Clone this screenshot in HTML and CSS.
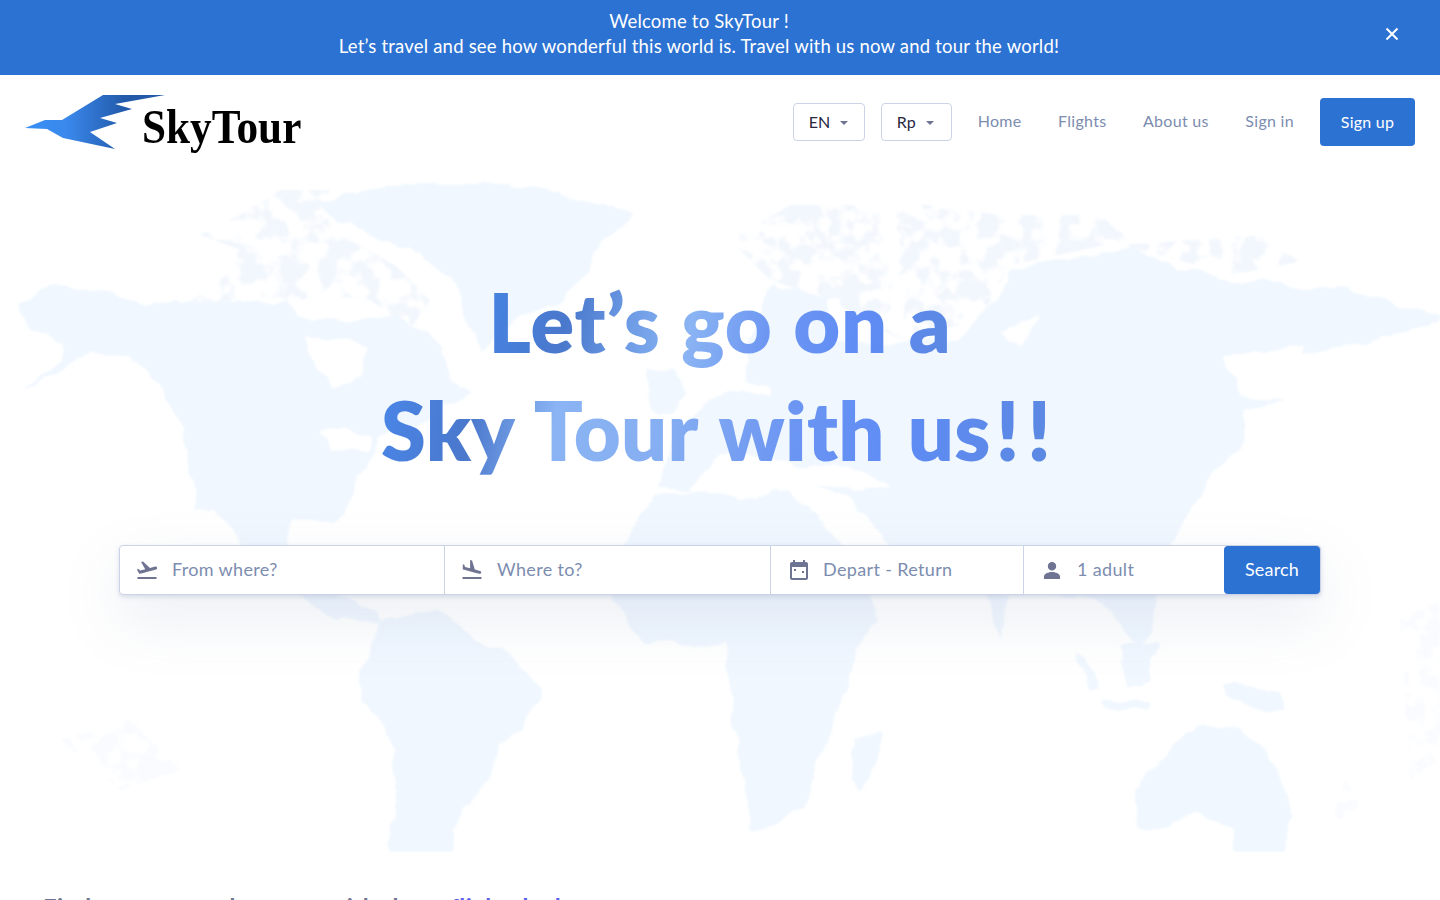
FILE: index.html
```html
<!DOCTYPE html>
<html lang="en">
<head>
<meta charset="utf-8">
<title>SkyTour</title>
<link rel="stylesheet" href="styles.css">
</head>
<body>
<div class="banner">
  <p class="banner-text">Welcome to SkyTour !<br>Let’s travel and see how wonderful this world is. Travel with us now and tour the world!</p>
  <button class="banner-close" aria-label="Close">
    <svg viewBox="0 0 14 14" width="14" height="14"><path d="M1.5 1.5l11 11M12.5 1.5l-11 11" stroke="#fff" stroke-width="2" fill="none"/></svg>
  </button>
</div>
<header class="nav">
  <a class="logo">
    <svg class="logo-mark" viewBox="25 95 140 54" width="140" height="54">
      <defs><linearGradient id="lg" x1="0" y1="0" x2="1" y2="0"><stop offset="0" stop-color="#3a90f5"/><stop offset=".3" stop-color="#3a88ec"/><stop offset=".72" stop-color="#2259a9"/><stop offset="1" stop-color="#2259a9"/></linearGradient></defs>
      <polygon fill="url(#lg)" points="25,128 45,120 62,120 103,95 165,95 115,104 132,109 100,118 117,123 90,132 115,149 63,138 47,129"/>
    </svg>
    <span class="logo-text">SkyTour</span>
  </a>
  <nav class="nav-items">
    <button class="select select-en">EN<i class="caret"></i></button>
    <button class="select select-rp">Rp<i class="caret"></i></button>
    <a class="link">Home</a>
    <a class="link">Flights</a>
    <a class="link">About us</a>
    <a class="link link-last">Sign in</a>
    <button class="signup">Sign up</button>
  </nav>
</header>
<main class="hero">
  <svg class="map" viewBox="0 169 1440 683" aria-hidden="true">
    <defs>
      <filter id="rough" x="0" y="169" width="1440" height="683" filterUnits="userSpaceOnUse" primitiveUnits="userSpaceOnUse">
        <feTurbulence type="fractalNoise" baseFrequency=".028" numOctaves="4" seed="7" result="n"/>
        <feDisplacementMap in="SourceGraphic" in2="n" scale="16" xChannelSelector="R" yChannelSelector="G"/>
        <feGaussianBlur stdDeviation="1"/>
      </filter>
      <filter id="mottle" x="0" y="169" width="1440" height="683" filterUnits="userSpaceOnUse" primitiveUnits="userSpaceOnUse">
        <feTurbulence type="fractalNoise" baseFrequency=".05" numOctaves="3" seed="3"/>
        <feColorMatrix type="matrix" values="0 0 0 0 0  0 0 0 0 0  0 0 0 0 0  7 0 0 0 -3.1" result="m"/>
        <feComposite in="SourceGraphic" in2="m" operator="in"/>
        <feGaussianBlur stdDeviation="1.2"/>
      </filter>
    </defs>
    <g class="map-arctic" filter="url(#mottle)">
      <polygon points="190,300 215,285 240,250 200,235 240,215 280,190 330,190 350,240 395,265 430,300 410,330 370,300 325,295 300,300 240,296 205,312"/>
      <polygon points="730,240 790,205 930,205 1000,215 1100,215 1130,240 1010,265 980,320 900,340 830,300 770,280"/>
      <polygon points="1120,245 1260,235 1300,262 1230,275 1160,255"/>
      <g class="map-faint">
        <polygon points="1345,780 1360,800 1345,825 1335,815"/>
        <polygon points="60,740 130,720 180,770 120,790"/>
        <polygon points="1400,620 1440,600 1440,760 1410,780"/>
      </g>
    </g>
    <g filter="url(#rough)">
      <g class="map-land">
        <polygon points="20,300 55,286 100,290 142,302 175,298 220,303 240,296 262,305 285,300 300,318 345,322 400,315 430,340 450,375 470,395 445,402 430,420 400,425 378,438 365,470 352,490 345,512 330,520 294,523 285,545 330,590 350,600 378,612 385,625 330,618 290,590 250,560 216,510 197,510 188,470 184,430 147,367 92,350 60,372 20,395 60,362 65,345 30,330"/>
        <polygon points="320,200 370,186 430,183 540,186 630,212 600,240 590,270 560,300 520,320 482,350 465,320 452,275 410,250 375,235 335,225"/>
        <polygon points="385,620 440,610 470,635 500,650 540,690 525,730 500,745 480,790 450,830 453,870 388,870 395,790 395,750 365,700 358,670 375,640"/>
        <polygon points="652,495 700,490 740,500 790,490 812,510 850,560 881,620 860,640 840,710 815,770 800,810 753,833 735,743 725,645 643,643 615,600 620,550"/>
        <polygon points="854,740 880,737 872,775 860,793 852,780"/>
        <polygon points="660,485 668,440 700,410 720,395 745,385 750,340 775,287 825,295 830,338 880,348 960,338 1000,300 1010,270 1130,247 1180,270 1225,280 1317,287 1363,293 1445,317 1400,337 1330,347 1290,365 1285,400 1250,410 1239,447 1215,470 1193,510 1160,560 1157,595 1150,625 1140,650 1115,610 1065,595 1040,590 1010,595 1000,640 985,595 960,570 905,590 880,530 850,500 815,480 790,460 720,455 690,490"/>
        <polygon points="645,370 670,367 684,395 675,410 650,408"/>
        <polygon points="1120,645 1157,643 1150,680 1125,687"/>
        <polygon points="1075,650 1085,652 1100,690 1092,693"/>
        <polygon points="1102,700 1148,702 1148,710 1104,708"/>
        <polygon points="1221,683 1276,692 1285,710 1250,708 1222,698"/>
        <polygon points="1134,790 1160,760 1180,740 1200,727 1225,730 1240,725 1260,745 1285,790 1292,815 1282,870 1240,870 1235,830 1200,815 1160,825 1138,830"/>
      </g>
      <g class="map-sea">
        <polygon points="303,337 367,345 365,375 335,387 310,360"/>
        <polygon points="320,430 372,435 368,450 330,452"/>
        <polygon points="294,523 349,525 340,543 300,540"/>
        <polygon points="720,383 766,380 768,392 725,392"/>
        <polygon points="789,463 860,470 894,488 860,492 810,480"/>
        <polygon points="894,277 915,272 905,320 885,330"/>
        <polygon points="1225,352 1308,347 1290,400 1240,398"/>
        <polygon points="1000,330 1040,315 1020,350"/>
      </g>
    </g>
  </svg>
  <h1 class="headline"><span class="line line-one">Let’s go on a</span><span class="line line-two">Sky Tour with us<span class="bangs">!!</span></span></h1>
  <form class="search">
    <div class="field field-wide field-from">
      <svg class="icon" viewBox="0 0 24 24"><path d="M2.5 19h19v2h-19v-2zm19.57-9.36c-.21-.8-1.04-1.28-1.84-1.06L14.92 10l-6.9-6.43-1.93.51 4.14 7.17-4.97 1.33-1.97-1.54-1.45.39 2.59 4.49s7.12-1.9 16.57-4.43c.81-.23 1.28-1.05 1.07-1.85z"/></svg>
      <span>From where?</span>
    </div>
    <div class="field field-wide">
      <svg class="icon" viewBox="0 0 24 24"><path d="M2.5 19h19v2h-19v-2zm7.18-5.73l4.35 1.16 5.31 1.42c.8.21 1.62-.26 1.84-1.06.21-.8-.26-1.62-1.06-1.84l-5.31-1.42-2.76-9.02L10.12 2v8.28L5.15 8.95l-.93-2.32-1.45-.39v5.17l1.6.43 5.31 1.43z"/></svg>
      <span>Where to?</span>
    </div>
    <div class="field field-date">
      <svg class="icon" viewBox="0 0 24 24"><path d="M19 4h-1V2h-2v2H8V2H6v2H5c-1.11 0-1.99.9-1.99 2L3 20a2 2 0 0 0 2 2h14c1.1 0 2-.9 2-2V6c0-1.1-.9-2-2-2zm0 16H5V9h14v11z"/><rect x="7" y="11" width="2" height="2"/><rect x="15" y="13" width="2" height="2"/></svg>
      <span>Depart - Return</span>
    </div>
    <div class="field field-people">
      <svg class="icon" viewBox="0 0 24 24"><path d="M12 12.5c2.35 0 4.2-1.85 4.2-4.25S14.35 4 12 4 7.8 5.85 7.8 8.25s1.85 4.25 4.2 4.25zm0 1.6c-3 0-8 1.5-8 4.4V21h16v-2.5c0-2.9-5-4.4-8-4.4z"/></svg>
      <span>1 adult</span>
    </div>
    <button class="search-btn" type="button">Search</button>
  </form>
</main>
<section class="deals">
  <h2 class="deals-title">Find your next adventure with these <em>flight deals</em></h2>
  <a class="deals-all">All</a>
</section>
</body>
</html>
```
FILE: styles.css
```css
* { box-sizing: border-box; }
html, body { margin: 0; height: 900px; overflow: hidden; background: #fff; }
body { font-family: "Lato", "Open Sans", sans-serif; color: #27273f; }
button { font: inherit; cursor: pointer; }

.banner { height: 75px; background: #2c72d3; display: flex; align-items: center; position: relative; padding: 0 42px 8px 0; }
.banner-text { flex: 1; margin: 0; text-align: center; color: #fff; font-size: 18.5px; letter-spacing: .2px; line-height: 25px; }
.banner-close { position: absolute; right: 41px; top: 27px; width: 14px; height: 14px; padding: 0; border: 0; background: none; display: flex; }

.nav { height: 94px; display: flex; align-items: center; justify-content: space-between; padding: 0 25px; }
.logo { display: flex; align-items: flex-start; height: 60px; margin-top: 6px; }
.logo-mark { display: block; flex: none; }
.logo-text { margin-left: -23px; margin-top: 4px; font-family: "Liberation Serif", serif; font-weight: 700; font-size: 48px; line-height: 56px; color: #000; transform: scaleX(.9); transform-origin: left center; }
.nav-items { display: flex; align-items: center; }
.select { height: 38px; border: 1px solid #cbd4e6; border-radius: 4px; background: #fff; color: #27273f; font-size: 16px; letter-spacing: .1px; display: flex; align-items: center; padding: 0 15px 2px; margin-right: 16px; }
.select-en { width: 72px; }
.select-rp { width: 71px; margin-right: 26px; }
.caret { margin: 3px 0 0 10px; border: 4px solid transparent; border-top-color: #6e7491; border-bottom: 0; display: block; }
.link { font-size: 16px; letter-spacing: .3px; color: #7c8db0; margin: -3px 36.5px 0 0; }
.link-last { margin-right: 26px; }
.signup { width: 95px; height: 48px; padding: 0 0 2px; background: #2c72d3; color: #fff; border: 0; border-radius: 4px; font-size: 16px; letter-spacing: .25px; }

.hero { position: relative; height: 683px; display: flex; flex-direction: column; align-items: center; padding-top: 99px; }
.map { position: absolute; left: 0; top: 0; width: 1440px; height: 683px; display: block; }
.map-land { fill: #f0f7ff; }
.map-arctic { fill: #f2f7fd; }
.map-faint { fill: #f9fbfe; }
.map-sea { fill: #fff; }

.headline { position: relative; margin: 0 0 61px; font-size: 81px; line-height: 108px; font-weight: 800; text-align: center; filter: blur(.6px); }
.line { display: block; width: max-content; white-space: nowrap; margin: 0 auto; -webkit-background-clip: text; background-clip: text; color: transparent; }
.line-one { letter-spacing: .85px; word-spacing: 1px; background-image: linear-gradient(100deg, #4683e2 0%, #4a78cc 18%, #6f9de6 32%, #8ab4f3 44%, #6e97f2 60%, #5f8cf5 80%, #5b88e0 100%); }
.line-two { letter-spacing: .3px; word-spacing: 4px; background-image: linear-gradient(100deg, #4a86e8 0%, #4a78cc 14%, #8ab4f3 26%, #86aef2 42%, #6c96f2 60%, #5f8cf5 75%, #5b88e0 100%); }
.bangs { letter-spacing: 8px; margin-left: 5px; }

.search { position: relative; width: 1202px; height: 50px; display: flex; background: #fff; border: 1px solid #cbd4e6; border-radius: 4px; box-shadow: 0 2px 4px rgba(124,141,176,.25), 0 24px 60px rgba(124,141,176,.16); }
.field { display: flex; align-items: center; gap: 13px; padding: 0 0 2px 15px; border-right: 1px solid #cbd4e6; font-size: 18px; letter-spacing: .35px; color: #7c8db0; flex: none; }
.field-wide { width: 326px; }
.field-from { width: 325px; }
.field-date { width: 253px; padding-left: 16px; gap: 12px; }
.field-people { width: 200px; border-right: 0; padding-left: 16px; gap: 13px; }
.icon { width: 24px; height: 24px; fill: #6e7491; flex: none; margin-top: 2px; }
.search-btn { width: 96px; height: 48px; padding: 0 0 2px; flex: none; background: #2c72d3; color: #fff; border: 0; border-radius: 4px; font-size: 18px; letter-spacing: .2px; }

.deals { position: relative; padding: 40px 124px 0 43px; display: flex; justify-content: space-between; align-items: baseline; }
.deals-title { margin: 0; font-size: 24px; letter-spacing: .45px; line-height: 32px; font-weight: 700; color: #6e7491; }
.deals-title em { font-style: normal; color: #605dec; }
.deals-all { font-size: 18px; color: #a1b0cc; }
```
